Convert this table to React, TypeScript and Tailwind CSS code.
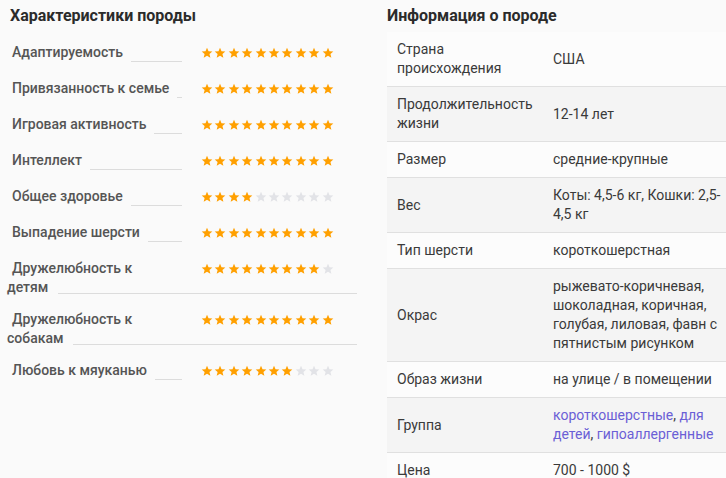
import React from "react";

type Trait = { lines: string[]; score: number };

const traits: Trait[] = [
  { lines: ["Адаптируемость"], score: 10 },
  { lines: ["Привязанность к семье"], score: 10 },
  { lines: ["Игровая активность"], score: 10 },
  { lines: ["Интеллект"], score: 10 },
  { lines: ["Общее здоровье"], score: 4 },
  { lines: ["Выпадение шерсти"], score: 10 },
  { lines: ["Дружелюбность к", "детям"], score: 9 },
  { lines: ["Дружелюбность к", "собакам"], score: 10 },
  { lines: ["Любовь к мяуканью"], score: 7 },
];

type Info = { label: string; value: React.ReactNode };

const info: Info[] = [
  { label: "Страна происхождения", value: "США" },
  { label: "Продолжительность жизни", value: "12-14 лет" },
  { label: "Размер", value: "средние-крупные" },
  { label: "Вес", value: "Коты: 4,5-6 кг, Кошки: 2,5-4,5 кг" },
  { label: "Тип шерсти", value: "короткошерстная" },
  { label: "Окрас", value: "рыжевато-коричневая, шоколадная, коричная, голубая, лиловая, фавн с пятнистым рисунком" },
  { label: "Образ жизни", value: "на улице / в помещении" },
  {
    label: "Группа",
    value: (
      <>
        <a className="text-[#6b5fd6]">короткошерстные</a>, <a className="text-[#6b5fd6]">для детей</a>,{" "}
        <a className="text-[#6b5fd6]">гипоаллергенные</a>
      </>
    ),
  },
  { label: "Цена", value: "700 - 1000 $" },
];

const Star = ({ on }: { on: boolean }) => (
  <svg width="12" height="12" viewBox="0 0 24 24" className={on ? "fill-[#ffa000]" : "fill-[#e2e3e7]"}>
    <path d="M12 1.5l3.1 7.1 7.6.6-5.8 5 1.8 7.5L12 17.7l-6.6 4 1.8-7.5-5.8-5 7.6-.6z" />
  </svg>
);

const Stars = ({ score }: { score: number }) => (
  <div className="flex h-[19px] items-center gap-[1.4px]">
    {Array.from({ length: 10 }, (_, i) => (
      <Star key={i} on={i < score} />
    ))}
  </div>
);

const TraitRow = ({ t }: { t: Trait }) => {
  if (t.lines.length === 1) {
    return (
      <div className="flex h-9 items-start pt-[7px]">
        <div className="flex h-[19px] w-[175px] items-end">
          <span className="pl-[5px] leading-[19px] whitespace-nowrap">{t.lines[0]}</span>
          <div className="ml-2 flex-1 border-b border-[#dcdcdc]" />
        </div>
        <div className="ml-[19px]">
          <Stars score={t.score} />
        </div>
      </div>
    );
  }
  return (
    <div className="h-[51px] pt-[7px]">
      <div className="flex">
        <span className="w-[194px] pl-[5px] leading-[19px]">{t.lines[0]}</span>
        <Stars score={t.score} />
      </div>
      <div className="flex w-[350px] items-end">
        <span className="leading-[19px]">{t.lines[1]}</span>
        <div className="ml-[10px] mb-[3px] flex-1 border-b border-[#dcdcdc]" />
      </div>
    </div>
  );
};

export default function App() {
  return (
    <div className="flex h-[478px] w-[726px] overflow-hidden bg-[#fafafa] font-['Roboto',sans-serif]">
      <section className="w-[387px] shrink-0 pl-[7px]">
        <h2 className="mt-[6px] pl-[3px] text-[16px] font-bold leading-5 text-[#2b2b2b]">Характеристики породы</h2>
        <div className="mt-[10px] text-[14px] font-medium text-[#555]">
          {traits.map((t) => (
            <TraitRow key={t.lines.join(" ")} t={t} />
          ))}
        </div>
      </section>
      <section className="w-[339px] shrink-0">
        <h2 className="mt-[6px] text-[16px] font-bold leading-5 text-[#2b2b2b]">Информация о породе</h2>
        <div className="mt-[6px] text-[14px] leading-[19px] text-[#3a3a3a]">
          {info.map((r, i) => (
            <div
              key={r.label}
              className={`flex items-center border-b border-[#e0e0e0] py-2 ${i % 2 === 1 ? "bg-[#f4f4f4]" : "bg-[#fcfcfc]"}`}
            >
              <div className="w-[156px] shrink-0 px-[10px]">{r.label}</div>
              <div className="w-[180px] shrink-0 pl-[10px]">{r.value}</div>
            </div>
          ))}
        </div>
      </section>
    </div>
  );
}
